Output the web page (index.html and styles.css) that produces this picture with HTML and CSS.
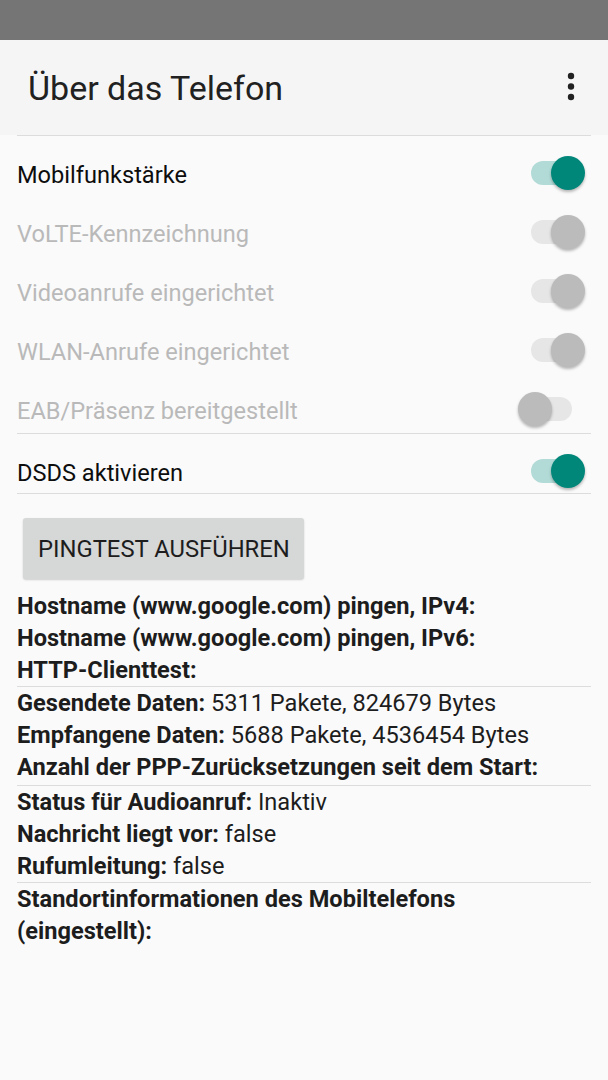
FILE: index.html
```html
<!DOCTYPE html>
<html lang="de">
<head>
<meta charset="utf-8">
<title>Über das Telefon</title>
<link rel="stylesheet" href="styles.css">
</head>
<body>
<div class="statusbar"></div>
<header class="appbar">
  <h1 class="title">Über das Telefon</h1>
  <svg class="more" width="12" height="34" viewBox="0 0 12 34" aria-hidden="true">
    <circle cx="6" cy="6" r="3.2" fill="#212121"/>
    <circle cx="6" cy="16.5" r="3.2" fill="#212121"/>
    <circle cx="6" cy="27" r="3.2" fill="#212121"/>
  </svg>
</header>
<main class="content">
  <div class="divider"></div>
  <section class="group group-first">
    <div class="row"><span class="label">Mobilfunkstärke</span><span class="switch on"></span></div>
    <div class="row disabled"><span class="label">VoLTE-Kennzeichnung</span><span class="switch on"></span></div>
    <div class="row disabled"><span class="label">Videoanrufe eingerichtet</span><span class="switch on"></span></div>
    <div class="row disabled"><span class="label">WLAN-Anrufe eingerichtet</span><span class="switch on"></span></div>
    <div class="row disabled"><span class="label">EAB/Präsenz bereitgestellt</span><span class="switch off"></span></div>
  </section>
  <div class="divider"></div>
  <section class="group">
    <div class="row"><span class="label">DSDS aktivieren</span><span class="switch on"></span></div>
  </section>
  <div class="divider"></div>
  <button class="btn" type="button">PINGTEST AUSFÜHREN</button>
  <section class="info">
    <p><b>Hostname (www.google.com) pingen, IPv4:</b></p>
    <p><b>Hostname (www.google.com) pingen, IPv6:</b></p>
    <p><b>HTTP-Clienttest:</b></p>
  </section>
  <div class="divider"></div>
  <section class="info info-tall">
    <p><b>Gesendete Daten:</b> 5311 Pakete, 824679 Bytes</p>
    <p><b>Empfangene Daten:</b> 5688 Pakete, 4536454 Bytes</p>
    <p><b>Anzahl der PPP-Zurücksetzungen seit dem Start:</b></p>
  </section>
  <div class="divider"></div>
  <section class="info">
    <p><b>Status für Audioanruf:</b> Inaktiv</p>
    <p><b>Nachricht liegt vor:</b> false</p>
    <p><b>Rufumleitung:</b> false</p>
  </section>
  <div class="divider"></div>
  <section class="info">
    <p><b>Standortinformationen des Mobiltelefons (eingestellt):</b></p>
  </section>
</main>
</body>
</html>
```
FILE: styles.css
```css
html, body {
  margin: 0;
  padding: 0;
}
body {
  background: #fafafa;
  font-family: Roboto, "Noto Sans", sans-serif;
  color: #212121;
  width: 608px;
  min-height: 1080px;
}
.statusbar {
  height: 40px;
  background: #757575;
}
.appbar {
  height: 95px;
  background: #f5f5f5;
  display: flex;
  align-items: center;
  justify-content: space-between;
  padding: 0 31px 0 28px;
  box-sizing: border-box;
}
.title {
  margin: 0;
  font-size: 34px;
  font-weight: 400;
  line-height: 40px;
  color: #212121;
}
.more {
  display: block;
  margin-top: -2px;
}
.content {
  padding: 0 17px;
}
.divider {
  height: 1px;
  background: #dcdcdc;
}
.group-first {
  padding-bottom: 2px;
}
.row {
  height: 59px;
  box-sizing: border-box;
  padding-top: 25px;
  display: flex;
  align-items: flex-start;
  justify-content: space-between;
}
.label {
  font-size: 23.6px;
  line-height: 28px;
  color: #0d0d0d;
}
.row.disabled .label {
  color: #b9b9b9;
}
.switch {
  position: relative;
  width: 41px;
  height: 24px;
  border-radius: 12px;
  margin-right: 19px;
  margin-top: 0;
  background: #e6e6e6;
}
.switch::after {
  content: "";
  position: absolute;
  top: -5px;
  width: 34px;
  height: 34px;
  border-radius: 50%;
  box-shadow: 0 2px 3px rgba(0, 0, 0, 0.28);
}
.switch.on::after {
  left: 20px;
}
.switch.off::after {
  left: -13px;
}
.row .switch.on {
  background: #b2dbd7;
}
.row .switch.on::after {
  background: #00877a;
}
.row.disabled .switch {
  background: #e6e6e6;
}
.row.disabled .switch::after {
  background: #bbbbbb;
}
.btn {
  display: block;
  margin: 24px 0 11px 6px;
  width: 281px;
  height: 61px;
  padding: 0 15px;
  border: none;
  border-radius: 3px;
  background: #d6d7d7;
  box-shadow: 0 1px 2px rgba(0, 0, 0, 0.18);
  font-family: Roboto, "Noto Sans", sans-serif;
  font-size: 23.8px;
  font-weight: 400;
  color: #1d1d1d;
  text-align: left;
  white-space: nowrap;
}
.info {
  font-size: 23.6px;
  line-height: 32px;
}
.info-tall {
  padding-bottom: 2px;
}
.info p {
  margin: 0;
  color: #1d1d1d;
}
.info b {
  font-weight: 700;
}
```
